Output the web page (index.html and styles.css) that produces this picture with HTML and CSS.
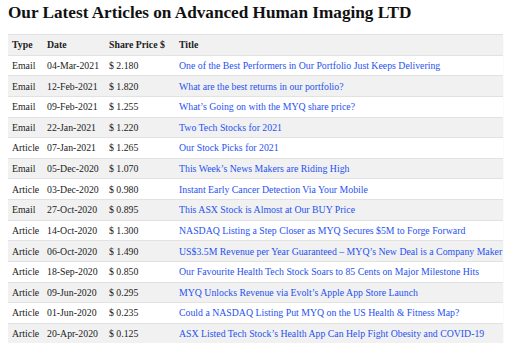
FILE: index.html
```html
<!DOCTYPE html>
<html>
<head>
    <title>Our Latest Articles</title>
    <link rel="stylesheet" href="styles.css">
</head>
<body>
    <h1>Our Latest Articles on Advanced Human Imaging LTD</h1>

    <table class="articles">
        <colgroup>
            <col class="col-type">
            <col class="col-date">
            <col class="col-price">
            <col>
        </colgroup>
        <thead>
            <tr>
                <th>Type</th>
                <th>Date</th>
                <th>Share Price $</th>
                <th>Title</th>
            </tr>
        </thead>
        <tbody>
            <tr><td>Email</td><td>04-Mar-2021</td><td>$ 2.180</td><td><a href="#">One of the Best Performers in Our Portfolio Just Keeps Delivering</a></td></tr>
            <tr><td>Email</td><td>12-Feb-2021</td><td>$ 1.820</td><td><a href="#">What are the best returns in our portfolio?</a></td></tr>
            <tr><td>Email</td><td>09-Feb-2021</td><td>$ 1.255</td><td><a href="#">What’s Going on with the MYQ share price?</a></td></tr>
            <tr><td>Email</td><td>22-Jan-2021</td><td>$ 1.220</td><td><a href="#">Two Tech Stocks for 2021</a></td></tr>
            <tr><td>Article</td><td>07-Jan-2021</td><td>$ 1.265</td><td><a href="#">Our Stock Picks for 2021</a></td></tr>
            <tr><td>Email</td><td>05-Dec-2020</td><td>$ 1.070</td><td><a href="#">This Week’s News Makers are Riding High</a></td></tr>
            <tr><td>Article</td><td>03-Dec-2020</td><td>$ 0.980</td><td><a href="#">Instant Early Cancer Detection Via Your Mobile</a></td></tr>
            <tr><td>Email</td><td>27-Oct-2020</td><td>$ 0.895</td><td><a href="#">This ASX Stock is Almost at Our BUY Price</a></td></tr>
            <tr><td>Article</td><td>14-Oct-2020</td><td>$ 1.300</td><td><a href="#">NASDAQ Listing a Step Closer as MYQ Secures $5M to Forge Forward</a></td></tr>
            <tr><td>Article</td><td>06-Oct-2020</td><td>$ 1.490</td><td><a href="#">US$3.5M Revenue per Year Guaranteed – MYQ’s New Deal is a Company Maker</a></td></tr>
            <tr><td>Article</td><td>18-Sep-2020</td><td>$ 0.850</td><td><a href="#">Our Favourite Health Tech Stock Soars to 85 Cents on Major Milestone Hits</a></td></tr>
            <tr><td>Article</td><td>09-Jun-2020</td><td>$ 0.295</td><td><a href="#">MYQ Unlocks Revenue via Evolt’s Apple App Store Launch</a></td></tr>
            <tr><td>Article</td><td>01-Jun-2020</td><td>$ 0.235</td><td><a href="#">Could a NASDAQ Listing Put MYQ on the US Health &amp; Fitness Map?</a></td></tr>
            <tr><td>Article</td><td>20-Apr-2020</td><td>$ 0.125</td><td><a href="#">ASX Listed Tech Stock’s Health App Can Help Fight Obesity and COVID-19</a></td></tr>
        </tbody>
    </table>
</body>
</html>
```

FILE: styles.css
```css
body {
    margin: 0 8px 8px 8px;
    font-family: "Liberation Serif", Georgia, serif;
    color: #222;
    background-color: #fff;
}

h1 {
    font-size: 17.2px;
    font-weight: bold;
    margin: 3px 0 11px 0;
    line-height: 20px;
    color: #111;
}

.articles {
    width: 495px;
    table-layout: fixed;
    border-collapse: collapse;
    font-size: 9.8px;
    box-shadow: 0 3px 6px rgba(0, 0, 0, 0.04);
}

.col-type { width: 35px; }
.col-date { width: 62px; }
.col-price { width: 70px; }

.articles th,
.articles td {
    text-align: left;
    padding: 0 4px;
    height: 19.64px;
    border-top: 1px solid #e2e2e2;
    white-space: nowrap;
    overflow: hidden;
}

.articles th {
    font-weight: bold;
    background-color: #f1f1f1;
}

.articles tbody tr:nth-child(even) {
    background-color: #f1f1f1;
}

.articles a {
    color: #1f52f0;
    text-decoration: none;
}
```
